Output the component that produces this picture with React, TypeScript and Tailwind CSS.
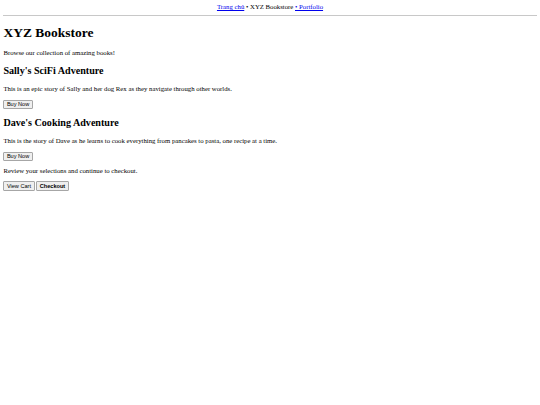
export default function App() {
  return (
    <div className="min-h-[405px] bg-white p-[3.4px] font-['Liberation_Serif',serif] text-[6.75px] leading-[1.15] text-black">
      <div className="border-b border-[#c8c8c8] pb-[3.4px] text-center">
        <a href="#" className="text-[#0000ee] underline">
          Trang chủ
        </a>{" "}
        • XYZ Bookstore{" "}
        <a href="#" className="text-[#0000ee] underline">
          • Portfolio
        </a>
      </div>
      <h1 className="my-[9px] text-[13.5px] font-bold">XYZ Bookstore</h1>
      <p className="my-[6.75px]">Browse our collection of amazing books!</p>

      <h2 className="my-[8.4px] text-[10.1px] font-bold">Sally's SciFi Adventure</h2>
      <p className="my-[6.75px]">
        This is an epic story of Sally and her dog Rex as they navigate through other worlds.
      </p>
      <Btn>Buy Now</Btn>

      <h2 className="my-[8.4px] text-[10.1px] font-bold">Dave's Cooking Adventure</h2>
      <p className="my-[6.75px]">
        This is the story of Dave as he learns to cook everything from pancakes to pasta, one recipe at a time.
      </p>
      <Btn>Buy Now</Btn>

      <p className="mt-[6px] mb-[6px]">Review your selections and continue to checkout.</p>
      <div className="flex gap-[1.7px]">
        <Btn>View Cart</Btn>
        <Btn bold>Checkout</Btn>
      </div>
    </div>
  );
}

function Btn({ children, bold }: { children: React.ReactNode; bold?: boolean }) {
  return (
    <button
      type="button"
      className={
        "rounded-[1px] border border-[#a6a6a6] bg-[#efefef] px-[2.5px] py-[0.5px] font-['Liberation_Sans',sans-serif] text-[5.6px] leading-[1.15] text-black " +
        (bold ? "font-bold" : "")
      }
    >
      {children}
    </button>
  );
}
